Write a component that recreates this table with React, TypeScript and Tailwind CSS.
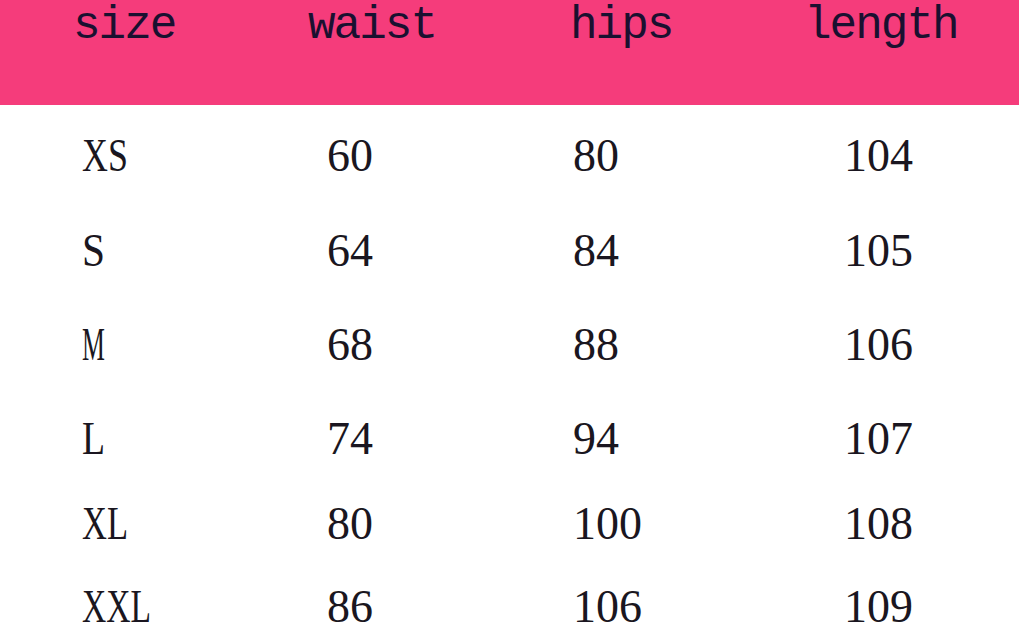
import React from "react";

const rows: { size: string; scale: string; h: string; v: string[] }[] = [
  { size: "XS", scale: "scale-x-[0.78]", h: "h-[94px]", v: ["60", "80", "104"] },
  { size: "S", scale: "scale-x-[0.9]", h: "h-[95px]", v: ["64", "84", "105"] },
  { size: "M", scale: "scale-x-[0.56]", h: "h-[94px]", v: ["68", "88", "106"] },
  { size: "L", scale: "scale-x-[0.82]", h: "h-[94px]", v: ["74", "94", "107"] },
  { size: "XL", scale: "scale-x-[0.75]", h: "h-[76px]", v: ["80", "100", "108"] },
  { size: "XXL", scale: "scale-x-[0.73]", h: "h-[90px]", v: ["86", "106", "109"] },
];

export default function App() {
  return (
    <div className="w-[1019px] h-[635px] overflow-hidden bg-white">
      <div className="h-[105px] bg-[#f53c7b] flex text-[#1a1030] text-[46px] tracking-[-2px] leading-[1.133] pl-[73px]" style={{ fontFamily: '"Liberation Mono", monospace' }}>
        <div className="w-[235px]">size</div>
        <div className="w-[262px]">waist</div>
        <div className="w-[234px]">hips</div>
        <div>length</div>
      </div>
      <div className="pt-[4px] text-[#1a1620] text-[46px] leading-none" style={{ fontFamily: '"Liberation Serif", serif' }}>
        {rows.map((r) => (
          <div key={r.size} className={`${r.h} flex items-center`}>
            <div className="w-[327px] pl-[82px]">
              <span className={`inline-block origin-left ${r.scale}`}>{r.size}</span>
            </div>
            <div className="w-[246px]">{r.v[0]}</div>
            <div className="w-[271px]">{r.v[1]}</div>
            <div>{r.v[2]}</div>
          </div>
        ))}
      </div>
    </div>
  );
}
